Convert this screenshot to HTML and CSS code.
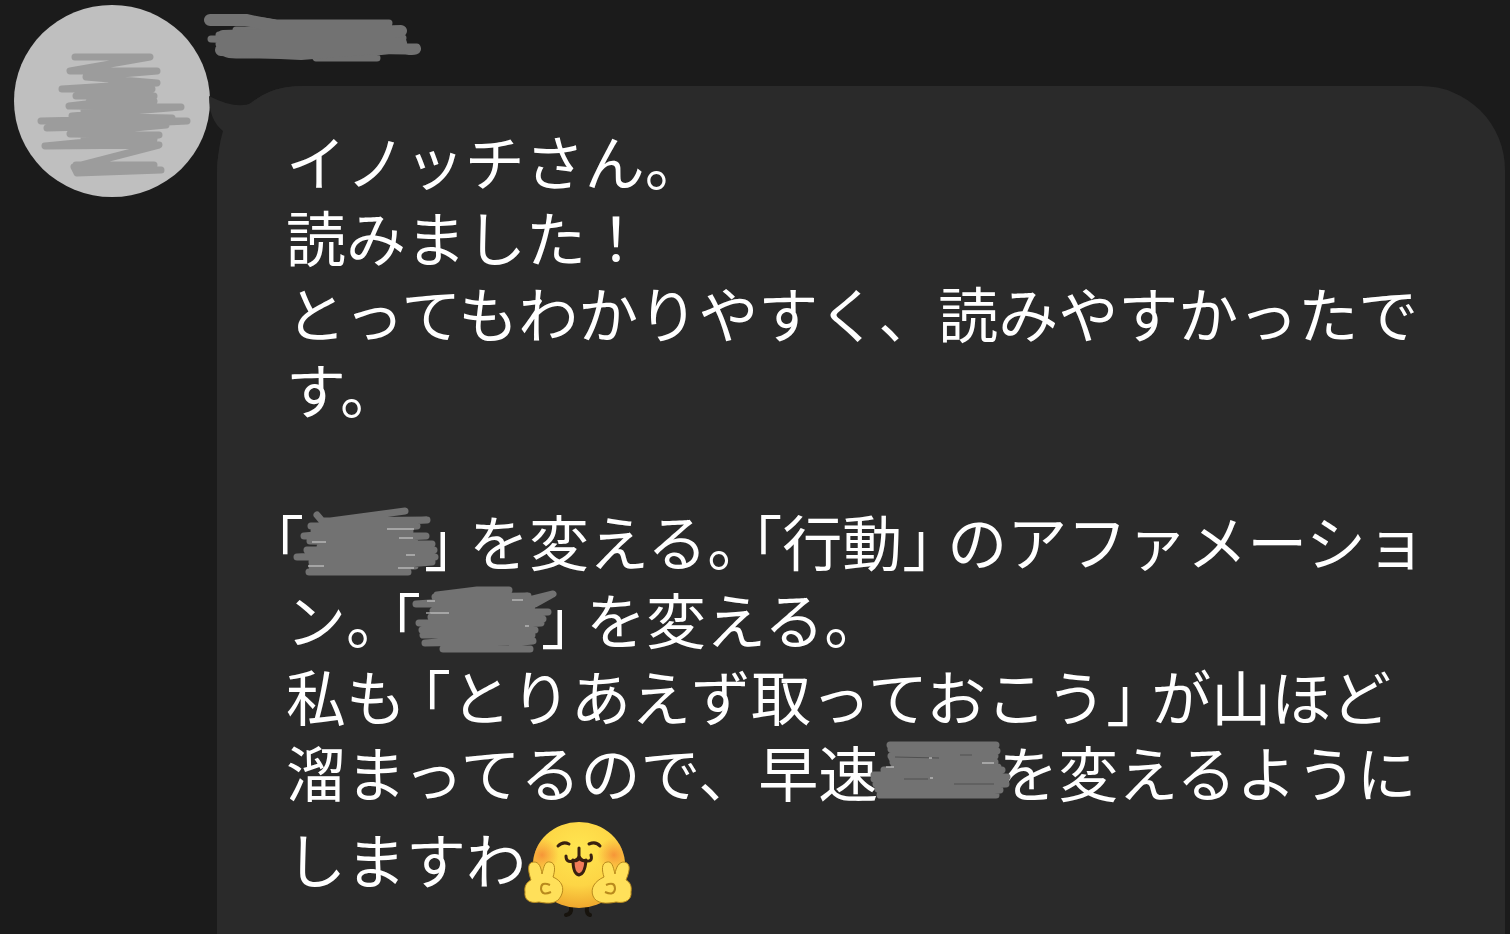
FILE: index.html
```
<!DOCTYPE html>
<html lang="ja">
<head>
    <meta charset="UTF-8">
    <meta name="viewport" content="width=device-width, initial-scale=1.0">
    <title>トーク</title>
    <link rel="stylesheet" href="styles.css">
</head>
<body>
    <main class="message">
        <svg class="avatar" viewBox="0 0 196 192" aria-hidden="true">
            <ellipse cx="98" cy="96" rx="98" ry="96" fill="#bfbfbf"/>
            <path class="avatar-scribble" d="M61 52H136L56 66H143L72 72L143 78L48 84H138L62 91H140L55 101L167 102L58 111L158 113L27 116H173L33 123L152 120L56 129L145 130L31 141L145 140L60 162L63 168L147 165L62 160H140L63 168M70 106L140 96M80 118H145M70 134H140M95 81L135 87M75 97H128"/>
        </svg>
        <div class="content">
            <div class="sender">
                <svg class="name-mask" viewBox="0 0 224 64" aria-hidden="true">
                    <path class="scribble" d="M7 20Q45 17 75 23H188M35 30H202L18 35L202 38L10 39L203 45L18 44L216 47Q219 53 205 51L22 48Q20 55 35 55H100L195 50L115 58H176M40 41H200M50 33H195"/>
                    <path class="scribble thick" d="M9 20H45L75 26H185M22 36L200 31M20 50L100 54L200 46M24 43H200"/>
                </svg>
            </div>
            <div class="bubble">
                <svg class="tail" viewBox="0 0 94 86" aria-hidden="true">
                    <path d="M94 0Q61 0 43 17Q27 24 0 10Q0 34 14 45Q9 61 8 86H94Z"/>
                </svg>
                <p class="text">
                    イノッチさん。<br>
                    読みました！<br>
                    とってもわかりやすく、読みやすかったで<br>
                    す。<br>
                    <br>
                    <span class="half hang">「</span><span class="hidden-word"><svg viewBox="0 0 150 70" aria-hidden="true">
                        <path class="scribble" d="M27 11L33 18L115 7M33 17L137 16L21 22L127 22L14 32H136L20 37L142 40L17 46H144L7 53H145L22 58H142L19 68H118L22 62H125M24 27H120M30 43H138M32 34H125"/>
                        <path class="fleck" d="M97 25H124M109 34H123M22 38H36M18 62H34M108 64H124M116 51H125"/>
                    </svg></span><span class="half close">」</span>を変える<span class="half">。</span><span class="half open">「</span>行動<span class="half close">」</span>のアファメーショ<br>
                    ン<span class="half">。</span><span class="half open">「</span><span class="hidden-word"><svg viewBox="0 0 150 70" aria-hidden="true">
                        <path class="scribble" d="M30 14L70 9H102L28 16L121 15L9 23H128L146 13L110 22L26 30L141 31L24 36L136 38L12 42H134L15 49H128L16 54H125L18 62L126 60L36 68H123L40 58M35 25H125M30 46H122M28 53H120"/>
                        <path class="fleck" d="M19 32H42M20 20H28M105 19H116M118 45H122"/>
                    </svg></span><span class="half close">」</span>を変える。<br>
                    私も<span class="half open">「</span>とりあえず取っておこう<span class="half close">」</span>が山ほど<br>
                    溜まってるので、早速<span class="hidden-word"><svg viewBox="0 6 150 70" aria-hidden="true">
                        <path class="scribble" d="M26 16H132L27 20L133 22L27 27H131L29 33H131L20 41H138L10 46L143 48L10 50H142L12 55H142L14 60L136 61L16 66H132M30 38H134M28 29H130"/>
                        <path class="dent" d="M31 28L75 29M96 26H108M40 50H64M90 55H130"/>
                        <path class="fleck" d="M22 38H30M118 34H130M66 49H69M65 29H68"/>
                    </svg></span>を変えるように<br>
                    しますわ<svg class="emoji" viewBox="0 0 110 98" role="img" aria-label="ピース">
                        <defs>
                            <radialGradient id="face" cx="50%" cy="32%" r="70%">
                                <stop offset="0" stop-color="#ffe650"/>
                                <stop offset=".6" stop-color="#fdd545"/>
                                <stop offset="1" stop-color="#eea42c"/>
                            </radialGradient>
                            <radialGradient id="cheek">
                                <stop offset="0" stop-color="#f58a35" stop-opacity=".85"/>
                                <stop offset="1" stop-color="#f79a38" stop-opacity="0"/>
                            </radialGradient>
                            <clipPath id="head">
                                <ellipse cx="55" cy="44" rx="46" ry="43"/>
                            </clipPath>
                        </defs>
                        <path d="M47 86Q48 93 42 94M63 86Q62 93 66 94" fill="none" stroke="#17130d" stroke-width="4" stroke-linecap="round"/>
                        <ellipse cx="55" cy="44" rx="46" ry="43" fill="url(#face)"/>
                        <g clip-path="url(#head)">
                            <circle cx="18" cy="34" r="17" fill="url(#cheek)"/>
                            <circle cx="90" cy="34" r="17" fill="url(#cheek)"/>
                        </g>
                        <g fill="none" stroke="#382010" stroke-width="3" stroke-linecap="round" stroke-linejoin="round">
                            <path d="M34 25Q39 20 45 23M65 23Q72 20 76 25"/>
                            <path d="M49 39Q49 53 55 54Q61 53 62 39Q58 41 55 37Q53 41 49 39Z" fill="#f27b59"/>
                            <path d="M55 27V36M42 35Q42 42 49 40Q54 39 55 35Q57 40 62 40Q69 41 67 34"/>
                        </g>
                        <g fill="#ffe05a" stroke="#b98a1d" stroke-width="1">
                            <path d="M7 59C3 47 4 41 10 41C15 41 17 46 18 53C20 45 21 40 26 41C32 42 31 50 29 56C38 60 41 67 37 75C33 83 25 83 15 81C5 83 0 78 1 71C0 65 3 61 7 59Z"/>
                            <path d="M26 64Q17 60 17 68Q18 75 27 71" fill="none" stroke-width="2"/>
                        </g>
                        <g fill="#ffe05a" stroke="#b98a1d" stroke-width="1">
                            <path d="M102 59C107 47 106 42 100 41C95 41 92 46 91 53C89 45 88 40 83 41C77 42 78 50 80 56C71 60 66 67 69 75C72 83 83 83 92 81C102 83 108 78 107 71C108 65 106 61 102 59Z"/>
                            <path d="M82 64Q91 60 91 68Q90 75 81 71" fill="none" stroke-width="2"/>
                        </g>
                    </svg>
                </p>
            </div>
        </div>
    </main>
</body>
</html>
```
FILE: styles.css
```
* {
    box-sizing: border-box;
}
body {
    margin: 0;
    background-color: #1b1b1b;
    color: #fff;
    font-family: "Noto Sans CJK JP", sans-serif;
}
.message {
    display: flex;
    gap: 7px;
    min-height: 100vh;
    padding: 0 5px 0 14px;
}
.avatar {
    flex: none;
    width: 196px;
    height: 192px;
    margin-top: 5px;
}
.avatar-scribble {
    fill: none;
    stroke: #9c9c9c;
    stroke-width: 7;
    stroke-linecap: round;
    stroke-linejoin: round;
}
.content {
    display: flex;
    flex: 1;
    flex-direction: column;
    min-width: 0;
}
.sender {
    height: 86px;
    margin-left: -16px;
}
.name-mask {
    display: block;
    width: 224px;
    height: 64px;
}
.bubble {
    position: relative;
    isolation: isolate;
    flex: 1;
    padding: 36px 0 0 69px;
    border-radius: 84px 84px 0 0;
    background-color: #2a2a2a;
}
.tail {
    position: absolute;
    z-index: -1;
    top: 0;
    left: -8px;
    width: 94px;
    height: 86px;
    fill: #2a2a2a;
}
.text {
    margin: 0;
    font-size: 60px;
    line-height: 76px;
    white-space: nowrap;
}
/* half-width punctuation */
.half {
    font-feature-settings: "halt";
    text-spacing-trim: space-all;
}
.open {
    margin-left: 15px;
}
.close {
    margin-right: 15px;
}
.hang {
    margin-left: -12px;
}
/* painted-over words */
.hidden-word {
    position: relative;
    display: inline-block;
    width: 120px;
    height: 60px;
    vertical-align: middle;
}
.hidden-word svg {
    position: absolute;
    top: -16px;
    left: -14px;
    width: 150px;
    height: 70px;
    overflow: visible;
}
.scribble {
    fill: none;
    stroke: #727272;
    stroke-width: 7;
    stroke-linecap: round;
    stroke-linejoin: round;
}
.thick {
    stroke-width: 12;
}
.fleck {
    stroke: #d8d8d8;
    stroke-width: 1;
}
.dent {
    stroke: #505050;
    stroke-width: 1;
}
.emoji {
    width: 110px;
    height: 98px;
    margin: 10px 0 0 -2px;
    vertical-align: -35px;
}
```
